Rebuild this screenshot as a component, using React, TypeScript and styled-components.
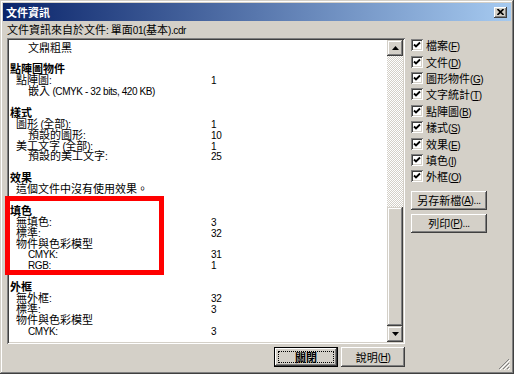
import React from "react";
import styled, { createGlobalStyle } from "styled-components";

const FONT = `"Liberation Sans", "Noto Sans CJK TC", sans-serif`;

const Global = createGlobalStyle`
  html, body { margin: 0; padding: 0; background: #d4d0c8; }
  body { font-family: ${FONT}; font-size: 11px; color: #000; }
  #root { width: 514px; height: 374px; }
`;

const Window = styled.div`
  position: relative;
  box-sizing: border-box;
  width: 514px;
  height: 374px;
  padding: 3px;
  background: #d4d0c8;
  box-shadow: inset -1px -1px #404040, inset 1px 1px #d4d0c8,
    inset -2px -2px #808080, inset 2px 2px #ffffff;
  display: flex;
  flex-direction: column;
  font-family: ${FONT};
  font-size: 11px;
  overflow: hidden;
`;

const TitleBar = styled.div`
  height: 18px;
  flex: none;
  display: flex;
  align-items: center;
  justify-content: space-between;
  padding: 0 4px 0 3px;
  background: linear-gradient(to right, #0a246a, #a6caf0);
`;

const TitleText = styled.span`
  color: #fff;
  font-weight: 700;
  font-size: 11px;
`;

const CloseButton = styled.div`
  box-sizing: border-box;
  width: 13px;
  height: 11px;
  background: #d4d0c8;
  box-shadow: inset -1px -1px #404040, inset 1px 1px #ffffff,
    inset -2px -2px #808080;
  display: flex;
  align-items: center;
  justify-content: center;
`;

const Body = styled.div`
  display: grid;
  grid-template-columns: 398px 76px;
  grid-template-rows: 17px 306px auto;
  grid-template-areas:
    "cap cap"
    "list side"
    "foot side";
  column-gap: 6px;
  padding-left: 4px;
`;

const Caption = styled.div`
  grid-area: cap;
  padding-top: 2px;
  line-height: 15px;
  white-space: nowrap;
`;

const Latin = styled.span`
  font-family: "Liberation Sans", sans-serif;
  font-size: 10px;
  letter-spacing: -0.4px;
`;

const ListBox = styled.div`
  grid-area: list;
  box-sizing: border-box;
  padding: 2px;
  background: #fff;
  box-shadow: inset 1px 1px #808080, inset -1px -1px #ffffff,
    inset 2px 2px #404040, inset -2px -2px #d4d0c8;
  display: flex;
  overflow: hidden;
`;

const ListContent = styled.div`
  flex: 1;
  overflow: hidden;
  padding-top: 2.5px;
`;

const Row = styled.div<{ $bold?: boolean }>`
  display: grid;
  grid-template-columns: 202px 1fr;
  height: 10.9px;
  line-height: 10.9px;
  white-space: nowrap;
  font-weight: ${(p) => (p.$bold ? 700 : 400)};
`;

const RowLabel = styled.span<{ $level: number }>`
  padding-left: ${(p) => [1, 7, 19][p.$level]}px;
`;

const ScrollBar = styled.div`
  width: 16px;
  flex: none;
  display: flex;
  flex-direction: column;
  background: repeating-conic-gradient(#ffffff 0 25%, #d4d0c8 0 50%) 0 0 / 2px
    2px;
`;

const raised = `
  background: #d4d0c8;
  box-shadow: inset -1px -1px #404040, inset 1px 1px #d4d0c8,
    inset -2px -2px #808080, inset 2px 2px #ffffff;
`;

const ScrollButton = styled.div`
  height: 16px;
  flex: none;
  display: flex;
  align-items: center;
  justify-content: center;
  ${raised}
`;

const ScrollTrack = styled.div`
  flex: 1;
`;

const ScrollThumb = styled.div<{ $size: number }>`
  height: ${(p) => p.$size}px;
  flex: none;
  ${raised}
`;

const Footer = styled.div`
  grid-area: foot;
  display: flex;
  justify-content: flex-end;
  gap: 3px;
  padding-top: 3px;
`;

const PushButton = styled.div<{ $default?: boolean; $w: number; $h: number }>`
  position: relative;
  box-sizing: border-box;
  width: ${(p) => p.$w}px;
  height: ${(p) => p.$h}px;
  display: flex;
  align-items: center;
  justify-content: center;
  white-space: nowrap;
  background: #d4d0c8;
  font-weight: ${(p) => (p.$default ? 700 : 400)};
  box-shadow: ${(p) =>
    p.$default
      ? "inset 0 0 0 1px #000, inset -2px -2px #404040, inset 2px 2px #ffffff, inset -3px -3px #808080"
      : "inset -1px -1px #404040, inset 1px 1px #ffffff, inset -2px -2px #808080, inset 2px 2px #d4d0c8"};
  ${(p) =>
    p.$default
      ? `&::after { content: ""; position: absolute; inset: 4px; border: 1px dotted #000; }`
      : ""}
`;

const SidePanel = styled.div`
  grid-area: side;
  display: flex;
  flex-direction: column;
  margin-top: -1px;
`;

const CheckRow = styled.div`
  height: 16.4px;
  display: flex;
  align-items: center;
  gap: 3px;
  white-space: nowrap;
`;

const CheckBox = styled.div`
  box-sizing: border-box;
  width: 12px;
  height: 12px;
  flex: none;
  background: #fff;
  box-shadow: inset 1px 1px #808080, inset -1px -1px #ffffff,
    inset 2px 2px #404040, inset -2px -2px #d4d0c8;
  display: flex;
  align-items: center;
  justify-content: center;
`;

const SideButtons = styled.div`
  display: flex;
  flex-direction: column;
  gap: 4px;
  margin-top: 6px;
`;

const Annotation = styled.div`
  position: absolute;
  left: 5px;
  top: 196px;
  width: 159px;
  height: 79px;
  box-sizing: border-box;
  border: 5px solid #ff0000;
  pointer-events: none;
`;

const Grip = styled.svg`
  position: absolute;
  right: 4px;
  bottom: 4px;
`;

const T = ({ s }: { s: string }) => (
  <>
    {s
      .split(/([\x20-\x7E]+)/)
      .filter((p) => p !== "")
      .map((p, i) =>
        /^[\x20-\x7E]+$/.test(p) ? <Latin key={i}>{p}</Latin> : <React.Fragment key={i}>{p}</React.Fragment>
      )}
  </>
);

const Key = ({ k }: { k: string }) => (
  <Latin>
    (<u>{k}</u>)
  </Latin>
);

type Line = { t?: string; l?: number; b?: boolean; v?: string };

const lines: Line[] = [
  { t: "文鼎粗黑", l: 2 },
  {},
  { t: "點陣圖物件", l: 0, b: true },
  { t: "點陣圖:", l: 1, v: "1" },
  { t: "嵌入 (CMYK - 32 bits, 420 KB)", l: 2 },
  {},
  { t: "樣式", l: 0, b: true },
  { t: "圖形 (全部):", l: 1, v: "1" },
  { t: "預設的圖形:", l: 2, v: "10" },
  { t: "美工文字 (全部):", l: 1, v: "1" },
  { t: "預設的美工文字:", l: 2, v: "25" },
  {},
  { t: "效果", l: 0, b: true },
  { t: "這個文件中沒有使用效果。", l: 1 },
  {},
  { t: "填色", l: 0, b: true },
  { t: "無填色:", l: 1, v: "3" },
  { t: "標準:", l: 1, v: "32" },
  { t: "物件與色彩模型", l: 1 },
  { t: "CMYK:", l: 2, v: "31" },
  { t: "RGB:", l: 2, v: "1" },
  {},
  { t: "外框", l: 0, b: true },
  { t: "無外框:", l: 1, v: "32" },
  { t: "標準:", l: 1, v: "3" },
  { t: "物件與色彩模型", l: 1 },
  { t: "CMYK:", l: 2, v: "3" },
];

const checks: [string, string][] = [
  ["檔案", "F"],
  ["文件", "D"],
  ["圖形物件", "G"],
  ["文字統計", "T"],
  ["點陣圖", "B"],
  ["樣式", "S"],
  ["效果", "E"],
  ["填色", "I"],
  ["外框", "O"],
];

const Arrow = ({ up }: { up?: boolean }) => (
  <svg width="7" height="4" viewBox="0 0 7 4">
    <polygon points={up ? "3.5,0 7,4 0,4" : "0,0 7,0 3.5,4"} fill="#000" />
  </svg>
);

const Check = () => (
  <svg width="8" height="8" viewBox="0 0 8 8">
    <path d="M1 3.5 L3 5.5 L7 1.5" stroke="#000" strokeWidth="1.8" fill="none" />
  </svg>
);

export default function App() {
  return (
    <>
      <Global />
      <Window>
        <TitleBar>
          <TitleText>文件資訊</TitleText>
          <CloseButton>
            <svg width="7" height="6" viewBox="0 0 7 6">
              <path d="M0.5 0 L6.5 6 M6.5 0 L0.5 6" stroke="#000" strokeWidth="1.6" />
            </svg>
          </CloseButton>
        </TitleBar>
        <Body>
          <Caption>
            <T s="文件資訊來自於文件: 單面01(基本).cdr" />
          </Caption>
          <ListBox>
            <ListContent>
              {lines.map((ln, i) => (
                <Row key={i} $bold={ln.b}>
                  <RowLabel $level={ln.l ?? 0}>
                    <T s={ln.t ?? ""} />
                  </RowLabel>
                  <span>
                    <T s={ln.v ?? ""} />
                  </span>
                </Row>
              ))}
            </ListContent>
            <ScrollBar>
              <ScrollButton>
                <Arrow up />
              </ScrollButton>
              <ScrollTrack />
              <ScrollThumb $size={119} />
              <ScrollButton>
                <Arrow />
              </ScrollButton>
            </ScrollBar>
          </ListBox>
          <SidePanel>
            {checks.map(([label, key]) => (
              <CheckRow key={key}>
                <CheckBox>
                  <Check />
                </CheckBox>
                <span>
                  {label}
                  <Key k={key} />
                </span>
              </CheckRow>
            ))}
            <SideButtons>
              <PushButton $w={76} $h={19}>
                另存新檔<Key k="A" />
                <Latin>...</Latin>
              </PushButton>
              <PushButton $w={76} $h={19}>
                列印<Key k="P" />
                <Latin>...</Latin>
              </PushButton>
            </SideButtons>
          </SidePanel>
          <Footer>
            <PushButton $default $w={64} $h={20}>
              關閉
            </PushButton>
            <PushButton $w={64} $h={20}>
              說明<Key k="H" />
            </PushButton>
          </Footer>
        </Body>
        <Annotation />
        <Grip width="12" height="12" viewBox="0 0 12 12">
          <path d="M11 1 L1 11 M11 5 L5 11 M11 9 L9 11" stroke="#808080" strokeWidth="1" />
          <path d="M12 2 L2 12 M12 6 L6 12 M12 10 L10 12" stroke="#ffffff" strokeWidth="1" />
        </Grip>
      </Window>
    </>
  );
}
